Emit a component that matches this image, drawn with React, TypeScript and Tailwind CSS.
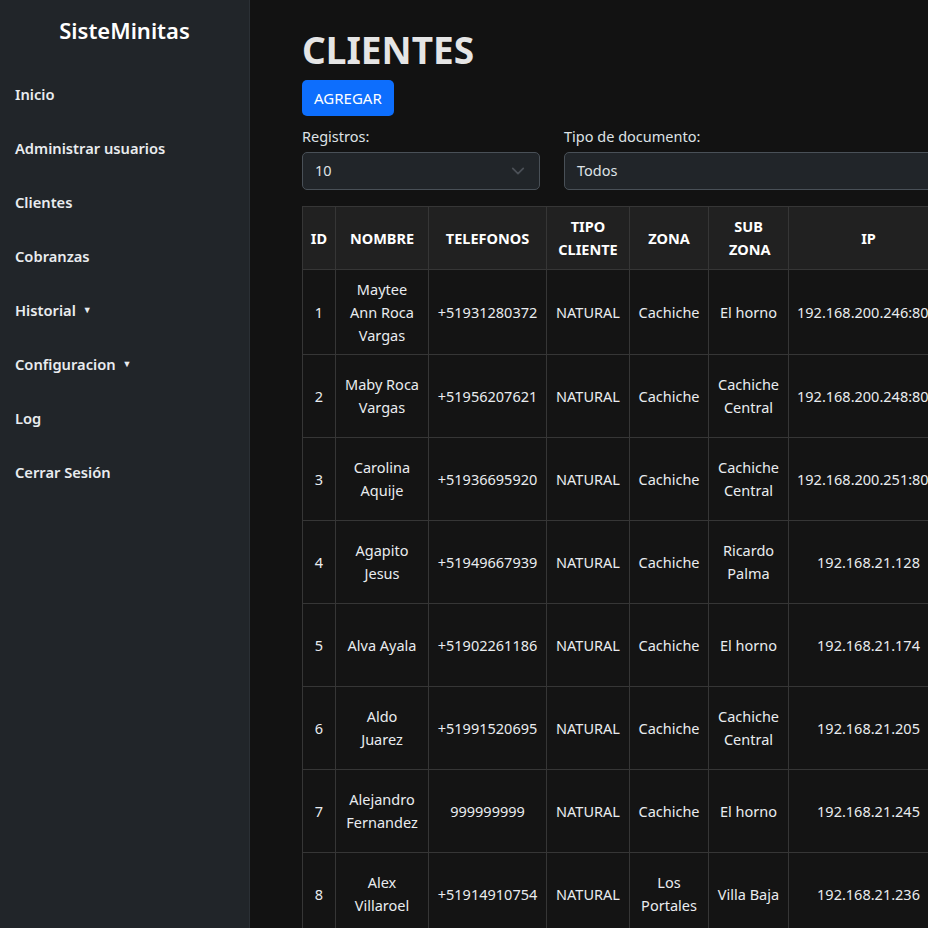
import React from "react";

const menu = [
  { label: "Inicio" },
  { label: "Administrar usuarios" },
  { label: "Clientes" },
  { label: "Cobranzas" },
  { label: "Historial", caret: true },
  { label: "Configuracion", caret: true },
  { label: "Log" },
  { label: "Cerrar Sesión" },
];

const rows = [
  { id: 1, nombre: ["Maytee", "Ann Roca", "Vargas"], tel: "+51931280372", zona: "Cachiche", sub: "El horno", ip: "192.168.200.246:8080" },
  { id: 2, nombre: ["Maby Roca", "Vargas"], tel: "+51956207621", zona: "Cachiche", sub: "Cachiche Central", ip: "192.168.200.248:8080" },
  { id: 3, nombre: ["Carolina", "Aquije"], tel: "+51936695920", zona: "Cachiche", sub: "Cachiche Central", ip: "192.168.200.251:8080" },
  { id: 4, nombre: ["Agapito", "Jesus"], tel: "+51949667939", zona: "Cachiche", sub: "Ricardo Palma", ip: "192.168.21.128" },
  { id: 5, nombre: ["Alva Ayala"], tel: "+51902261186", zona: "Cachiche", sub: "El horno", ip: "192.168.21.174" },
  { id: 6, nombre: ["Aldo", "Juarez"], tel: "+51991520695", zona: "Cachiche", sub: "Cachiche Central", ip: "192.168.21.205" },
  { id: 7, nombre: ["Alejandro", "Fernandez"], tel: "999999999", zona: "Cachiche", sub: "El horno", ip: "192.168.21.245" },
  { id: 8, nombre: ["Alex", "Villaroel"], tel: "+51914910754", zona: "Los Portales", sub: "Villa Baja", ip: "192.168.21.236" },
];

function Chevron() {
  return (
    <svg width="14" height="14" viewBox="0 0 16 16" fill="none" stroke="#4b5057" strokeWidth="2" strokeLinecap="round" strokeLinejoin="round">
      <path d="M2 5l6 6 6-6" />
    </svg>
  );
}

export default function App() {
  return (
    <div
      className="flex w-[928px] h-[928px] overflow-hidden bg-[#121212] text-[#dee2e6]"
      style={{ fontFamily: '"Noto Sans", "Open Sans", sans-serif' }}
    >
      {/* Sidebar */}
      <aside className="w-[250px] shrink-0 bg-[#212529] border-r border-[#2b3035]">
        <h1 className="text-center text-[22px] font-semibold text-white pt-[14px] leading-[32px]">SisteMinitas</h1>
        <nav className="mt-[21px]">
          {menu.map((m) => (
            <div key={m.label} className="flex items-center h-[54px] px-[15px] text-[14.7px] font-semibold text-[#e9ecef]">
              {m.label}
              {m.caret && <span className="ml-[7px] text-[9px]">▼</span>}
            </div>
          ))}
        </nav>
      </aside>

      {/* Main */}
      <main className="flex-1 min-w-0 overflow-hidden pl-[52px] pt-[26px]">
        <h2 className="text-[37px] font-bold leading-[48px] text-[#e5e5e5]">CLIENTES</h2>
        <button className="mt-[6px] h-[36px] px-[12px] rounded-[5px] bg-[#0d6efd] text-white text-[15px]">AGREGAR</button>

        <div className="flex gap-[24px] mt-[9px] w-[700px]">
          <div className="w-[238px]">
            <label className="block text-[14.5px] leading-[22px] mb-[5px]">Registros:</label>
            <div className="flex items-center justify-between h-[38px] px-[12px] pr-[14px] rounded-[5px] border border-[#495057] bg-[#212529] text-[14.5px]">
              <span>10</span>
              <Chevron />
            </div>
          </div>
          <div className="flex-1">
            <label className="block text-[14.5px] leading-[22px] mb-[5px]">Tipo de documento:</label>
            <div className="flex items-center justify-between h-[38px] px-[12px] pr-[32px] rounded-[5px] border border-[#495057] bg-[#212529] text-[14.5px]">
              <span>Todos</span>
              <Chevron />
            </div>
          </div>
        </div>

        <table className="mt-[16px] table-fixed border-collapse text-[14.5px] leading-[23px] w-[900px] text-center">
          <thead>
            <tr className="bg-[#212121] font-bold text-white h-[63px]">
              <th className="w-[33px] border border-[#363636]">ID</th>
              <th className="w-[93px] border border-[#363636]">NOMBRE</th>
              <th className="w-[118px] border border-[#363636]">TELEFONOS</th>
              <th className="w-[83px] border border-[#363636] px-[8px]">TIPO CLIENTE</th>
              <th className="w-[79px] border border-[#363636]">ZONA</th>
              <th className="w-[80px] border border-[#363636] px-[20px]">SUB ZONA</th>
              <th className="w-[160px] border border-[#363636]">IP</th>
              <th className="w-[120px] border border-[#363636]">PLAN</th>
              <th className="w-[134px] border border-[#363636]">ACCIONES</th>
            </tr>
          </thead>
          <tbody className="bg-[#141414] text-[#e9ecef]">
            {rows.map((r) => (
              <tr key={r.id} className="h-[83px]">
                <td className="border border-[#363636] py-[7.5px]">{r.id}</td>
                <td className="border border-[#363636] py-[7.5px] px-[4px]">
                  {r.nombre.map((n) => (
                    <div key={n} className="whitespace-nowrap">{n}</div>
                  ))}
                </td>
                <td className="border border-[#363636] py-[7.5px]">{r.tel}</td>
                <td className="border border-[#363636] py-[7.5px]">NATURAL</td>
                <td className="border border-[#363636] py-[7.5px] px-[6px]">{r.zona}</td>
                <td className="border border-[#363636] py-[7.5px] px-[6px]">{r.sub}</td>
                <td className="border border-[#363636] py-[7.5px] px-[8px] whitespace-nowrap">{r.ip}</td>
                <td className="border border-[#363636] py-[7.5px]">30 Mbps</td>
                <td className="border border-[#363636] py-[7.5px]"></td>
              </tr>
            ))}
          </tbody>
        </table>
      </main>
    </div>
  );
}
